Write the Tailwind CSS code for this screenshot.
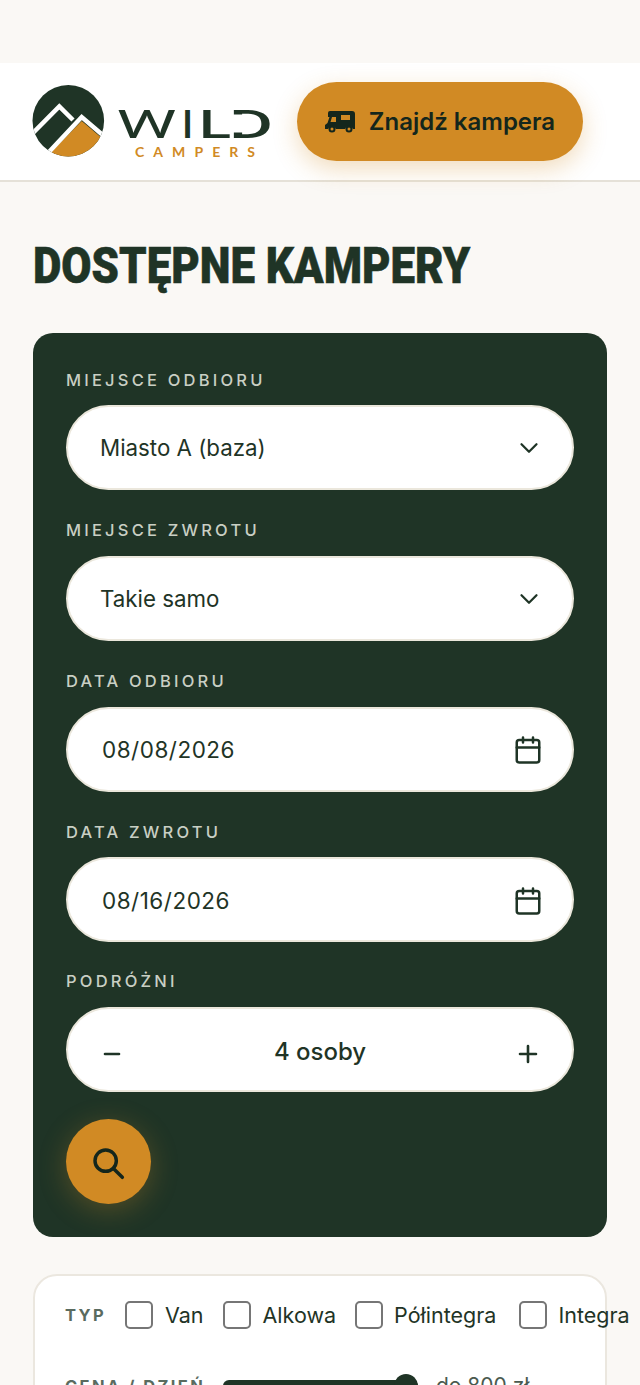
<!DOCTYPE html>
<html lang="pl">
<head>
  <meta charset="UTF-8">
  <title>Wild Campers</title>
  <script src="https://cdn.jsdelivr.net/npm/@tailwindcss/browser@4"></script>
</head>
<body class="bg-[#faf8f5] font-['Inter',sans-serif] text-[#1f3426] h-[1385px] overflow-hidden">

  <!-- HEADER -->
  <header class="mt-[63px] h-[119px] bg-white border-b-2 border-[#e5e1d8] flex items-center pl-[30px] gap-[22px]">
    <svg class="w-[245px] h-[80px] shrink-0" viewBox="30 82 245 80">
      <defs>
        <clipPath id="logoCircle"><circle cx="68.3" cy="120.7" r="35.8"/></clipPath>
      </defs>
      <g clip-path="url(#logoCircle)">
        <rect x="30" y="80" width="80" height="80" fill="#1f3426"/>
        <polygon points="50,153 81.7,121 103,139 103,160 50,160" fill="#d18a24"/>
        <polyline points="33,133 59.3,106.5 73,120" fill="none" stroke="#fff" stroke-width="4.5"/>
        <polyline points="48,153 81.7,117 105,137" fill="none" stroke="#fff" stroke-width="4.5"/>
      </g>
      <g font-family="Roboto" fill="#1f3426" font-size="39">
        <text x="116.5" y="137.5" textLength="60" lengthAdjust="spacingAndGlyphs" font-weight="400">W</text>
        <text x="182" y="137.5" font-weight="500">I</text>
        <text x="199" y="137.5" textLength="32" lengthAdjust="spacingAndGlyphs" font-weight="500">L</text>
        <text x="229" y="137.5" textLength="44" lengthAdjust="spacingAndGlyphs" font-weight="500">D</text>
      </g>
      <!-- the logo's D has no stem -->
      <rect x="231" y="114.5" width="16" height="18" fill="#fff"/>
      <text x="135" y="156.7" textLength="120" font-family="Lato" font-weight="700" font-size="14" fill="#d18a24">CAMPERS</text>
    </svg>
    <button class="w-[286px] h-[79px] rounded-full bg-[#d18a24] flex items-center justify-center gap-[14px] text-[24px] font-semibold text-[#14261c] shadow-[0_8px_24px_rgba(209,138,36,0.3)]">
      <svg class="w-[30px] h-[22px]" viewBox="0 0 30 22">
        <path fill="#14261c" d="M5 0h22a3 3 0 0 1 3 3v15h-2.2a4 4 0 0 0-7.6 0H10.8a4 4 0 0 0-7.6 0H0v-4l2.5-2L4.5 6H3V2a2 2 0 0 1 2-2z"/>
        <path fill="#d18a24" d="M7 6h4v5H5.5zM16 4h9v5h-9z"/>
        <circle cx="7" cy="18" r="2.5" fill="none" stroke="#14261c" stroke-width="2"/>
        <circle cx="24" cy="18" r="2.5" fill="none" stroke="#14261c" stroke-width="2"/>
      </svg>
      Znajdź kampera
    </button>
  </header>

  <main class="px-[33px]">
    <h1 class="mt-[54px] h-[60px] leading-[60px] font-['Roboto',sans-serif] font-black text-[50px] [-webkit-text-stroke:0.6px_#1f3426] origin-left scale-x-[0.876] whitespace-nowrap">DOSTĘPNE KAMPERY</h1>

    <!-- SEARCH FORM -->
    <section class="mt-[37px] h-[904px] bg-[#1f3426] rounded-[20px] px-[33px] pt-[37px]">
      <div class="h-[21px] leading-[21px] text-[16.5px] font-medium tracking-[3.2px] text-[#c9cfc4]">MIEJSCE ODBIORU</div>
      <div class="mt-[14px] h-[85px] bg-white rounded-full border-2 border-[#ebe7dc] flex items-center justify-between pl-[32px] pr-[28px] text-[22.3px]">
        Miasto A (baza)
        <svg class="w-[30px] h-[30px]" viewBox="0 0 24 24" fill="none" stroke="#1f3426" stroke-width="1.8" stroke-linecap="round" stroke-linejoin="round"><path d="m6 9 6 6 6-6"/></svg>
      </div>

      <div class="mt-[30px] h-[21px] leading-[21px] text-[16.5px] font-medium tracking-[3.2px] text-[#c9cfc4]">MIEJSCE ZWROTU</div>
      <div class="mt-[15px] h-[85px] bg-white rounded-full border-2 border-[#ebe7dc] flex items-center justify-between pl-[32px] pr-[28px] text-[22.3px]">
        Takie samo
        <svg class="w-[30px] h-[30px]" viewBox="0 0 24 24" fill="none" stroke="#1f3426" stroke-width="1.8" stroke-linecap="round" stroke-linejoin="round"><path d="m6 9 6 6 6-6"/></svg>
      </div>

      <div class="mt-[30px] h-[21px] leading-[21px] text-[16.5px] font-medium tracking-[3.2px] text-[#c9cfc4]">DATA ODBIORU</div>
      <div class="mt-[15px] h-[85px] bg-white rounded-full border-2 border-[#ebe7dc] flex items-center justify-between pl-[34px] pr-[29px] text-[22.5px] tracking-[0.5px]">
        08/08/2026
        <svg class="w-[30px] h-[30px]" viewBox="0 0 24 24" fill="none" stroke="#1f3426" stroke-width="2" stroke-linecap="round" stroke-linejoin="round"><rect x="3" y="4" width="18" height="18" rx="2"/><path d="M8 2v4M16 2v4M3 10h18"/></svg>
      </div>

      <div class="mt-[30px] h-[21px] leading-[21px] text-[16.5px] font-medium tracking-[3.2px] text-[#c9cfc4]">DATA ZWROTU</div>
      <div class="mt-[14px] h-[85px] bg-white rounded-full border-2 border-[#ebe7dc] flex items-center justify-between pl-[34px] pr-[29px] pt-[2px] text-[22.5px] tracking-[0.5px]">
        08/16/2026
        <svg class="w-[30px] h-[30px]" viewBox="0 0 24 24" fill="none" stroke="#1f3426" stroke-width="2" stroke-linecap="round" stroke-linejoin="round"><rect x="3" y="4" width="18" height="18" rx="2"/><path d="M8 2v4M16 2v4M3 10h18"/></svg>
      </div>

      <div class="mt-[29px] h-[21px] leading-[21px] text-[16.5px] font-medium tracking-[3.2px] text-[#c9cfc4]">PODRÓŻNI</div>
      <div class="mt-[15px] h-[85px] bg-white rounded-full border-2 border-[#ebe7dc] flex items-center justify-between pl-[32px] pr-[32px] pt-[4px] text-[24px] font-medium">
        <svg class="w-[24px] h-[24px] mt-[4px]" viewBox="0 0 24 24" fill="none" stroke="#1f3426" stroke-width="2.6" stroke-linecap="round"><path d="M5 12h14"/></svg>
        4 osoby
        <svg class="w-[24px] h-[24px] mt-[4px]" viewBox="0 0 24 24" fill="none" stroke="#1f3426" stroke-width="2.6" stroke-linecap="round"><path d="M4 12h16M12 4v16"/></svg>
      </div>

      <button class="mt-[27px] w-[85px] h-[85px] rounded-full bg-[#d18a24] flex items-center justify-center shadow-[0_6px_28px_rgba(209,138,36,0.3)]">
        <svg class="w-8 h-8 -ml-[3px] overflow-visible" viewBox="0 0 24 24" fill="none" stroke="#14261c" stroke-width="2.6" stroke-linecap="round"><circle cx="11" cy="11" r="8"/><path d="M23.5 23.5 17 17"/></svg>
      </button>
    </section>

    <!-- FILTERS -->
    <section class="mt-[37px] h-[300px] bg-white rounded-[24px] border-2 border-[#ebe7df] pl-[30px] pt-[24px]">
      <div class="flex items-center h-[30px] text-[21.5px] whitespace-nowrap">
        <span class="w-[60px] shrink-0 text-[16.5px] font-bold tracking-[2.4px] text-[#5a6b5f]">TYP</span>
        <span class="w-[28px] h-[28px] shrink-0 rounded-[5px] border-2 border-[#767676] bg-white"></span>
        <span class="ml-[12px] shrink-0">Van</span>
        <span class="ml-[19px] w-[28px] h-[28px] shrink-0 rounded-[5px] border-2 border-[#767676] bg-white"></span>
        <span class="ml-[12px] shrink-0">Alkowa</span>
        <span class="ml-[19px] w-[28px] h-[28px] shrink-0 rounded-[5px] border-2 border-[#767676] bg-white"></span>
        <span class="ml-[11px] shrink-0">Półintegra</span>
        <span class="ml-[23px] w-[28px] h-[28px] shrink-0 rounded-[5px] border-2 border-[#767676] bg-white"></span>
        <span class="ml-[11px] shrink-0">Integra</span>
      </div>
      <div class="mt-[41px] flex items-center h-[30px] whitespace-nowrap">
        <span class="w-[158px] shrink-0 text-[16.5px] font-bold tracking-[2.4px] text-[#5a6b5f]">CENA / DZIEŃ</span>
        <div class="relative w-[195px] h-[12px] bg-[#1f3426] rounded-full">
          <span class="absolute right-0 top-[-6px] w-[24px] h-[24px] rounded-full bg-[#1f3426]"></span>
        </div>
        <span class="ml-[18px] text-[21px] text-[#4a5a4f]">do 800 zł</span>
      </div>
    </section>
  </main>
</body>
</html>
